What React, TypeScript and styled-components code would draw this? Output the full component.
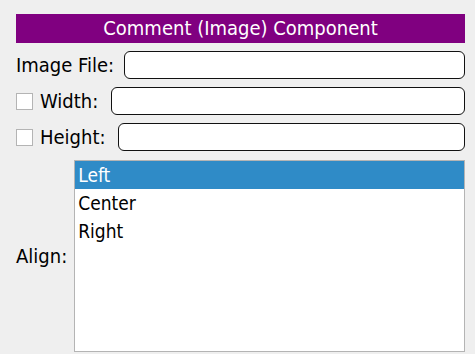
import { FC, useState } from 'react';
import styled, { createGlobalStyle } from 'styled-components';

const GlobalStyle = createGlobalStyle`
	html, body {
		margin: 0;
		padding: 0;
		background: #efefef;
	}
	body {
		font-family: 'DejaVu Sans Condensed', 'DejaVu Sans', sans-serif;
		font-size: 20px;
		color: #000;
	}
`;

const alignments = ['Left', 'Center', 'Right'];

const App: FC = () => {
	const [align, setAlign] = useState('Left');
	return (
		<>
			<GlobalStyle />
			<Panel>
				<Header>Comment (Image) Component</Header>
				<Row $gap={10}>
					<Label>Image File:</Label>
					<TextInput />
				</Row>
				<Row $gap={13}>
					<CheckLabel>
						<Check type='checkbox' />
						Width:
					</CheckLabel>
					<TextInput />
				</Row>
				<Row $gap={12}>
					<CheckLabel>
						<Check type='checkbox' />
						Height:
					</CheckLabel>
					<TextInput />
				</Row>
				<Row $gap={7}>
					<Label>Align:</Label>
					<ListBox>
						{alignments.map((item) => (
							<ListItem key={item} $selected={item === align} onClick={() => setAlign(item)}>
								{item}
							</ListItem>
						))}
					</ListBox>
				</Row>
			</Panel>
		</>
	);
};

const Panel = styled.div`
	display: flex;
	flex-direction: column;
	gap: 8px;
	padding: 14px 10px 0 16px;
`;

const Header = styled.div`
	background: #800080;
	color: #fff;
	height: 29px;
	line-height: 29px;
	text-align: center;
`;

const Row = styled.div<{ $gap?: number }>`
	display: flex;
	align-items: center;
	gap: ${(p) => p.$gap ?? 7}px;
`;

const Label = styled.span`
	white-space: nowrap;
`;

const CheckLabel = styled.label`
	display: flex;
	align-items: center;
	gap: 7px;
	white-space: nowrap;
`;

const Check = styled.input`
	appearance: none;
	margin: 0;
	width: 17px;
	height: 17px;
	background: #fff;
	border: 1px solid #b4b4b4;
	box-sizing: border-box;
`;

const TextInput = styled.input`
	flex: 1;
	min-width: 0;
	height: 28px;
	box-sizing: border-box;
	border: 1px solid #111;
	border-radius: 6px;
	background: #fff;
	font: inherit;
	outline: none;
`;

const ListBox = styled.div`
	flex: 1;
	height: 192px;
	margin-top: 1px;
	box-sizing: border-box;
	border: 1px solid #b4b4b4;
	background: #fff;
`;

const ListItem = styled.div<{ $selected?: boolean }>`
	height: 28px;
	line-height: 28px;
	padding-left: 3px;
	font-size: 19px;
	background: ${(p) => (p.$selected ? '#2f8bc7' : 'transparent')};
	color: ${(p) => (p.$selected ? '#fff' : '#000')};
	cursor: default;
`;

export default App;
